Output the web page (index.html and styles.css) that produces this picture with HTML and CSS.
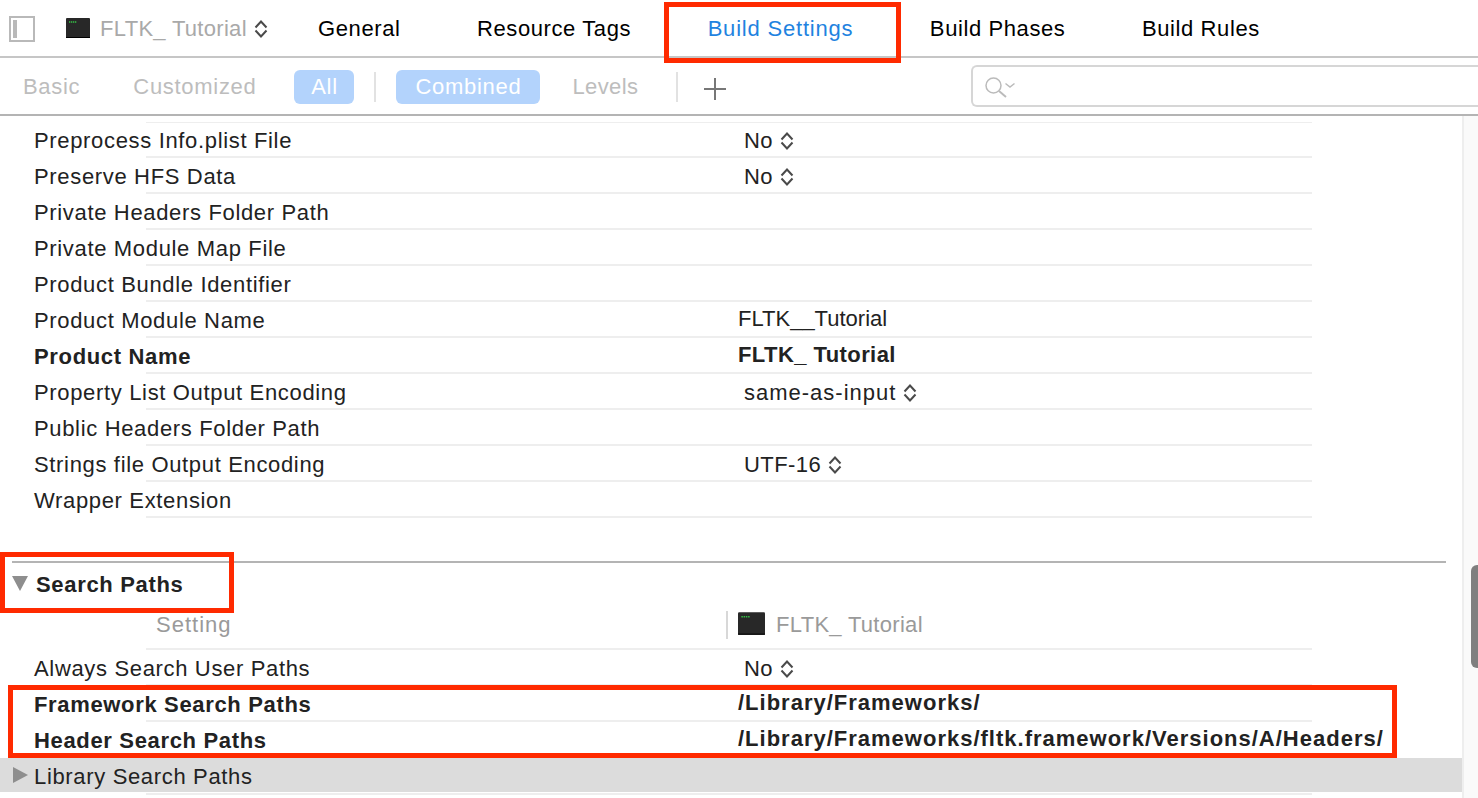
FILE: index.html
```html
<!DOCTYPE html>
<html lang="en">

<head>
    <meta charset="UTF-8">
    <title>Build Settings</title>
    <link rel="stylesheet" href="styles.css">
</head>

<body>
    <svg class="defs" width="0" height="0">
        <symbol id="terminal" viewBox="0 0 24 20">
            <rect x="0" y="0" width="24" height="20" rx="1" fill="#282828"/>
            <rect x="0" y="19" width="24" height="1" fill="#000"/>
            <path d="M3 4h1.300M5 4h1.300M7 4h1.300M9 4h1.300" stroke="#35c045" stroke-width="1.500"/>
        </symbol>
        <symbol id="stepper" viewBox="0 0 14 20">
            <path d="M1.500 8.500 7 2.500l5.500 6M1.500 11.500 7 17.500l5.500-6" fill="none" stroke="#4a4a4a" stroke-width="2"/>
        </symbol>
    </svg>

    <header class="tabbar">
        <div class="toggle"><span></span></div>
        <div class="target">
            <svg class="term" width="24" height="20"><use href="#terminal"/></svg>
            <span class="target-name">FLTK_ Tutorial</span>
            <svg class="step" width="14" height="20"><use href="#stepper"/></svg>
        </div>
        <nav class="tabs">
            <div>General</div>
            <div>Resource Tags</div>
            <div class="active">Build Settings</div>
            <div>Build Phases</div>
            <div>Build Rules</div>
        </nav>
    </header>

    <div class="filterbar">
        <div class="off basic">Basic</div>
        <div class="off custom">Customized</div>
        <div class="pill all">All</div>
        <div class="sep sep1"></div>
        <div class="pill combined">Combined</div>
        <div class="off levels">Levels</div>
        <div class="sep sep2"></div>
        <svg class="plus" width="24" height="24" viewBox="0 0 24 24">
            <path d="M12 1v22M1 12h22" stroke="#777" stroke-width="2"/>
        </svg>
        <div class="search">
            <svg width="34" height="24" viewBox="0 0 34 24">
                <circle cx="8.500" cy="11.500" r="7.500" fill="none" stroke="#bbb" stroke-width="1.500"/>
                <path d="M14 17l7 6" stroke="#bbb" stroke-width="2"/>
                <path d="M20.500 9.500l4.500 3.500 4.500-3.500" fill="none" stroke="#bbb" stroke-width="1.500"/>
            </svg>
        </div>
    </div>

    <main class="content">
        <div class="list">
            <div class="row first"><div class="name">Preprocess Info.plist File</div><div class="pick">No <svg class="step" width="14" height="20"><use href="#stepper"/></svg></div></div>
            <div class="row"><div class="name">Preserve HFS Data</div><div class="pick">No <svg class="step" width="14" height="20"><use href="#stepper"/></svg></div></div>
            <div class="row"><div class="name">Private Headers Folder Path</div><div></div></div>
            <div class="row"><div class="name">Private Module Map File</div><div></div></div>
            <div class="row"><div class="name">Product Bundle Identifier</div><div></div></div>
            <div class="row"><div class="name">Product Module Name</div><div class="val tight">FLTK__Tutorial</div></div>
            <div class="row bold"><div class="name">Product Name</div><div class="val">FLTK_ Tutorial</div></div>
            <div class="row"><div class="name">Property List Output Encoding</div><div class="pick wide">same-as-input <svg class="step" width="14" height="20"><use href="#stepper"/></svg></div></div>
            <div class="row"><div class="name">Public Headers Folder Path</div><div></div></div>
            <div class="row"><div class="name">Strings file Output Encoding</div><div class="pick">UTF-16 <svg class="step" width="14" height="20"><use href="#stepper"/></svg></div></div>
            <div class="row"><div class="name">Wrapper Extension</div><div></div></div>

            <div class="section-title">
                <span class="tri-down"></span>
                <span>Search Paths</span>
            </div>
            <div class="col-head">
                <div class="col-setting">Setting</div>
                <div class="col-target">
                    <svg width="27" height="23"><use href="#terminal"/></svg>
                    <span>FLTK_ Tutorial</span>
                </div>
            </div>
            <div class="row"><div class="name">Always Search User Paths</div><div class="pick">No <svg class="step" width="14" height="20"><use href="#stepper"/></svg></div></div>
            <div class="row bold"><div class="name">Framework Search Paths</div><div class="val path">/Library/Frameworks/</div></div>
            <div class="row bold"><div class="name">Header Search Paths</div><div class="val path">/Library/Frameworks/fltk.framework/Versions/A/Headers/</div></div>
            <div class="group"><span class="tri-right"></span><span class="name">Library Search Paths</span></div>
            <div class="group-end"></div>
        </div>
        <div class="scrollbar"><div class="thumb"></div></div>
    </main>

    <div class="mark mark-tab"></div>
    <div class="mark mark-section"></div>
    <div class="mark mark-rows"></div>
</body>

</html>
```

FILE: styles.css
```css
* {
    box-sizing: border-box;
}

html,
body {
    margin: 0;
    height: 798px;
    overflow: hidden;
    background-color: #fff;
}

body {
    font-family: "Liberation Sans", Arial, sans-serif;
    font-size: 22px;
    letter-spacing: 0.42px;
    color: #222;
}

.defs {
    position: absolute;
}

/* top tab bar */
.tabbar {
    display: flex;
    align-items: center;
    height: 58px;
    border-bottom: 2px solid #c6c6c6;
}

.toggle {
    width: 26px;
    height: 26px;
    margin: 2px 0 0 9px;
    padding: 2px;
    border: 2px solid #b9b9b9;
}

.toggle span {
    display: block;
    width: 4px;
    height: 100%;
    background-color: #b9b9b9;
}

.target {
    display: flex;
    align-items: center;
    width: 252px;
    margin-left: 31px;
}

.term {
    margin-right: 10px;
}

.target-name {
    padding-top: 2px;
    letter-spacing: 0.3px;
    color: #a9a9a9;
}

.target .step {
    margin: 2px 0 0 7px;
}

.tabs {
    display: flex;
    gap: 76.500px;
    padding-top: 2px;
    letter-spacing: 0.6px;
    color: #000;
}

.tabs .active {
    letter-spacing: 0.8px;
    color: #1f83e0;
}

/* filter bar */
.filterbar {
    display: flex;
    align-items: center;
    height: 58px;
    padding: 2px 0 0 23px;
    border-bottom: 2px solid #b4b4b4;
    letter-spacing: 0.7px;
}

.off {
    color: #bdbdbd;
}

.custom {
    margin-left: 53px;
}

.pill {
    height: 34px;
    line-height: 34px;
    border-radius: 6px;
    background-color: #b3d3fc;
    color: #fff;
    text-align: center;
}

.all {
    width: 60px;
    margin-left: 38px;
}

.sep {
    width: 2px;
    height: 30px;
    background-color: #e2e2e2;
}

.sep1 {
    margin-left: 20px;
}

.combined {
    width: 144px;
    margin-left: 20px;
}

.levels {
    margin-left: 32px;
    letter-spacing: 0.4px;
}

.sep2 {
    margin-left: 38px;
}

.plus {
    margin: 4px 0 0 25px;
}

/* runs off the right edge of the window, so no right border */
.search {
    display: flex;
    flex: 1;
    align-items: center;
    height: 42px;
    margin: -2px 0 0 244px;
    padding-left: 12px;
    border: 2px solid #d6d6d6;
    border-right: 0;
    border-radius: 6px 0 0 6px;
}

/* settings list */
.content {
    display: flex;
    height: 682px;
}

.list {
    flex: 1;
    padding-top: 6px;
}

.row {
    display: grid;
    grid-template-columns: 704px 1fr;
    align-items: center;
    height: 36px;
    padding-left: 34px;
    letter-spacing: 0.66px;
    background: linear-gradient(#eee, #eee) 146px 100% / 1166px 2px no-repeat;
}

.row.first {
    background:
        linear-gradient(#eee, #eee) 146px 100% / 1166px 2px no-repeat,
        linear-gradient(#eee, #eee) 146px -1px / 1166px 2px no-repeat;
}

.name {
    padding-top: 2px;
}

.bold {
    font-weight: bold;
}

.val {
    padding-bottom: 2px;
    letter-spacing: 0.42px;
}

.val.tight {
    letter-spacing: 0;
}

.val.path {
    letter-spacing: 1px;
}

.pick {
    display: flex;
    align-items: center;
    gap: 7px;
    margin-left: 6px;
    padding-top: 2px;
    letter-spacing: 0.42px;
}

.pick.wide {
    letter-spacing: 1px;
}

.section-title {
    display: flex;
    align-items: center;
    gap: 8px;
    height: 46px;
    margin: 43px 16px 0 12px;
    border-top: 2px solid #b4b4b4;
    font-weight: bold;
    letter-spacing: 0.67px;
}

.tri-down {
    margin-bottom: 3px;
    border-top: 15px solid #8e8e8e;
    border-left: 8.500px solid transparent;
    border-right: 8.500px solid transparent;
}

.col-head {
    display: flex;
    align-items: center;
    height: 43px;
    padding-bottom: 7px;
    background: linear-gradient(#eee, #eee) 146px 100% / 1166px 2px no-repeat;
    color: #9a9a9a;
}

.col-setting {
    width: 570px;
    margin-left: 156px;
    letter-spacing: 1px;
}

.col-target {
    display: flex;
    align-items: center;
    gap: 11px;
    height: 28px;
    padding-left: 10px;
    border-left: 2px solid #d8d8d8;
    letter-spacing: 0.3px;
}

.col-target svg {
    margin-bottom: 3px;
}

.group {
    display: flex;
    align-items: center;
    gap: 6px;
    height: 34px;
    padding: 2px 0 0 13px;
    letter-spacing: 0.66px;
    background-color: #dcdcdc;
}

.tri-right {
    margin-top: -3px;
    border-left: 15px solid #8e8e8e;
    border-top: 8.500px solid transparent;
    border-bottom: 8.500px solid transparent;
}

.group-end {
    height: 2px;
    margin-top: 1px;
    background: linear-gradient(#eee, #eee) 146px 0 / 1166px 2px no-repeat;
}

.scrollbar {
    width: 16px;
    padding: 449px 0 0 7px;
    background-color: #fafafa;
    border-left: 2px solid #eee;
}

.thumb {
    width: 7px;
    height: 103px;
    border-radius: 6px 0 0 6px;
    background-color: #7f7f7f;
}

/* red annotation boxes drawn on top of the screenshot */
.mark {
    position: absolute;
    border: 5px solid #ff2a00;
}

.mark-tab {
    left: 664px;
    top: 2px;
    width: 237px;
    height: 61px;
}

.mark-section {
    left: 0;
    top: 552px;
    width: 234px;
    height: 61px;
}

.mark-rows {
    left: 8px;
    top: 685px;
    width: 1389px;
    height: 73px;
}
```
